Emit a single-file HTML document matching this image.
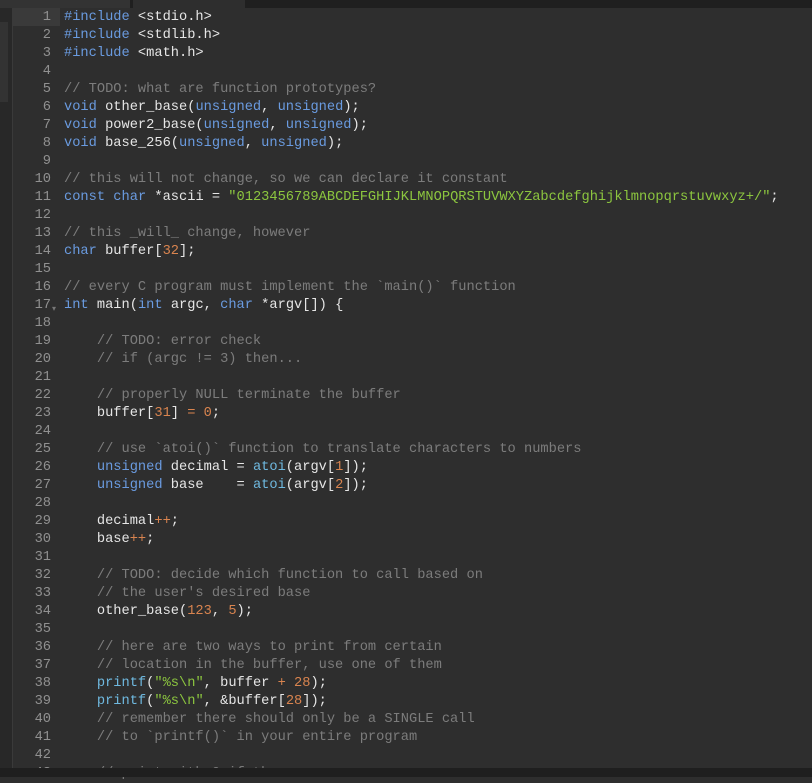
<!DOCTYPE html><html><head><style>
body{margin:0;width:812px;height:777px;overflow:hidden;background:#2e2e2e;font-family:"Liberation Mono",monospace;font-size:13.7px;}
#top{position:absolute;left:0;top:0;width:812px;height:8px;background:#1f1f1f}
#tab{position:absolute;left:133px;top:0;width:112px;height:8px;background:#2e2e2e}
#tl{position:absolute;left:0;top:0;width:130px;height:8px;background:#333}
#left{position:absolute;left:0;top:8px;width:12px;height:769px;background:#282828;border-right:1px solid #3a3a3a}
#lelem{position:absolute;left:0;top:14px;width:8px;height:80px;background:#333}
#bot{position:absolute;left:0;top:768px;width:812px;height:9px;background:#1f1f1f}
#g{position:absolute;left:13px;top:9px;width:38px;text-align:right;color:#909090;line-height:18px;white-space:pre}
#c{position:absolute;left:64px;top:9px;color:#e6e6e6;line-height:18px;white-space:pre}
#hl{position:absolute;left:13px;top:8px;width:47px;height:18px;background:#3a3a3a}
.k{color:#6a9be0}.cm{color:#7c7c7c}.n{color:#d9844f}.s{color:#8cc63f}.f{color:#6fb9e0}
#fold{position:absolute;left:52px;top:304px;color:#777;font-size:8px}
</style></head><body>
<div id="top"></div><div id="tl"></div><div id="tab"></div><div id="left"><div id="lelem"></div></div>
<div id="hl"></div>
<div id="g">1
2
3
4
5
6
7
8
9
10
11
12
13
14
15
16
17
18
19
20
21
22
23
24
25
26
27
28
29
30
31
32
33
34
35
36
37
38
39
40
41
42
43</div>
<div id="fold">▾</div>
<div id="c"><span class="k">#include</span> &lt;stdio.h&gt;
<span class="k">#include</span> &lt;stdlib.h&gt;
<span class="k">#include</span> &lt;math.h&gt;

<span class="cm">// TODO: what are function prototypes?</span>
<span class="k">void</span> other_base(<span class="k">unsigned</span>, <span class="k">unsigned</span>);
<span class="k">void</span> power2_base(<span class="k">unsigned</span>, <span class="k">unsigned</span>);
<span class="k">void</span> base_256(<span class="k">unsigned</span>, <span class="k">unsigned</span>);

<span class="cm">// this will not change, so we can declare it constant</span>
<span class="k">const</span> <span class="k">char</span> *ascii = <span class="s">"0123456789ABCDEFGHIJKLMNOPQRSTUVWXYZabcdefghijklmnopqrstuvwxyz+/"</span>;

<span class="cm">// this _will_ change, however</span>
<span class="k">char</span> buffer[<span class="n">32</span>];

<span class="cm">// every C program must implement the `main()` function</span>
<span class="k">int</span> main(<span class="k">int</span> argc, <span class="k">char</span> *argv[]) {

    <span class="cm">// TODO: error check</span>
    <span class="cm">// if (argc != 3) then...</span>

    <span class="cm">// properly NULL terminate the buffer</span>
    buffer[<span class="n">31</span>] <span class="n">=</span> <span class="n">0</span>;

    <span class="cm">// use `atoi()` function to translate characters to numbers</span>
    <span class="k">unsigned</span> decimal = <span class="f">atoi</span>(argv[<span class="n">1</span>]);
    <span class="k">unsigned</span> base    = <span class="f">atoi</span>(argv[<span class="n">2</span>]);

    decimal<span class="n">++</span>;
    base<span class="n">++</span>;

    <span class="cm">// TODO: decide which function to call based on</span>
    <span class="cm">// the user's desired base</span>
    other_base(<span class="n">123</span>, <span class="n">5</span>);

    <span class="cm">// here are two ways to print from certain</span>
    <span class="cm">// location in the buffer, use one of them</span>
    <span class="f">printf</span>(<span class="s">"%s\n"</span>, buffer <span class="n">+</span> <span class="n">28</span>);
    <span class="f">printf</span>(<span class="s">"%s\n"</span>, &amp;buffer[<span class="n">28</span>]);
    <span class="cm">// remember there should only be a SINGLE call</span>
    <span class="cm">// to `printf()` in your entire program</span>

    <span class="cm">// print with 0 if the ...</span></div>
<div id="bot"></div>
</body></html>
